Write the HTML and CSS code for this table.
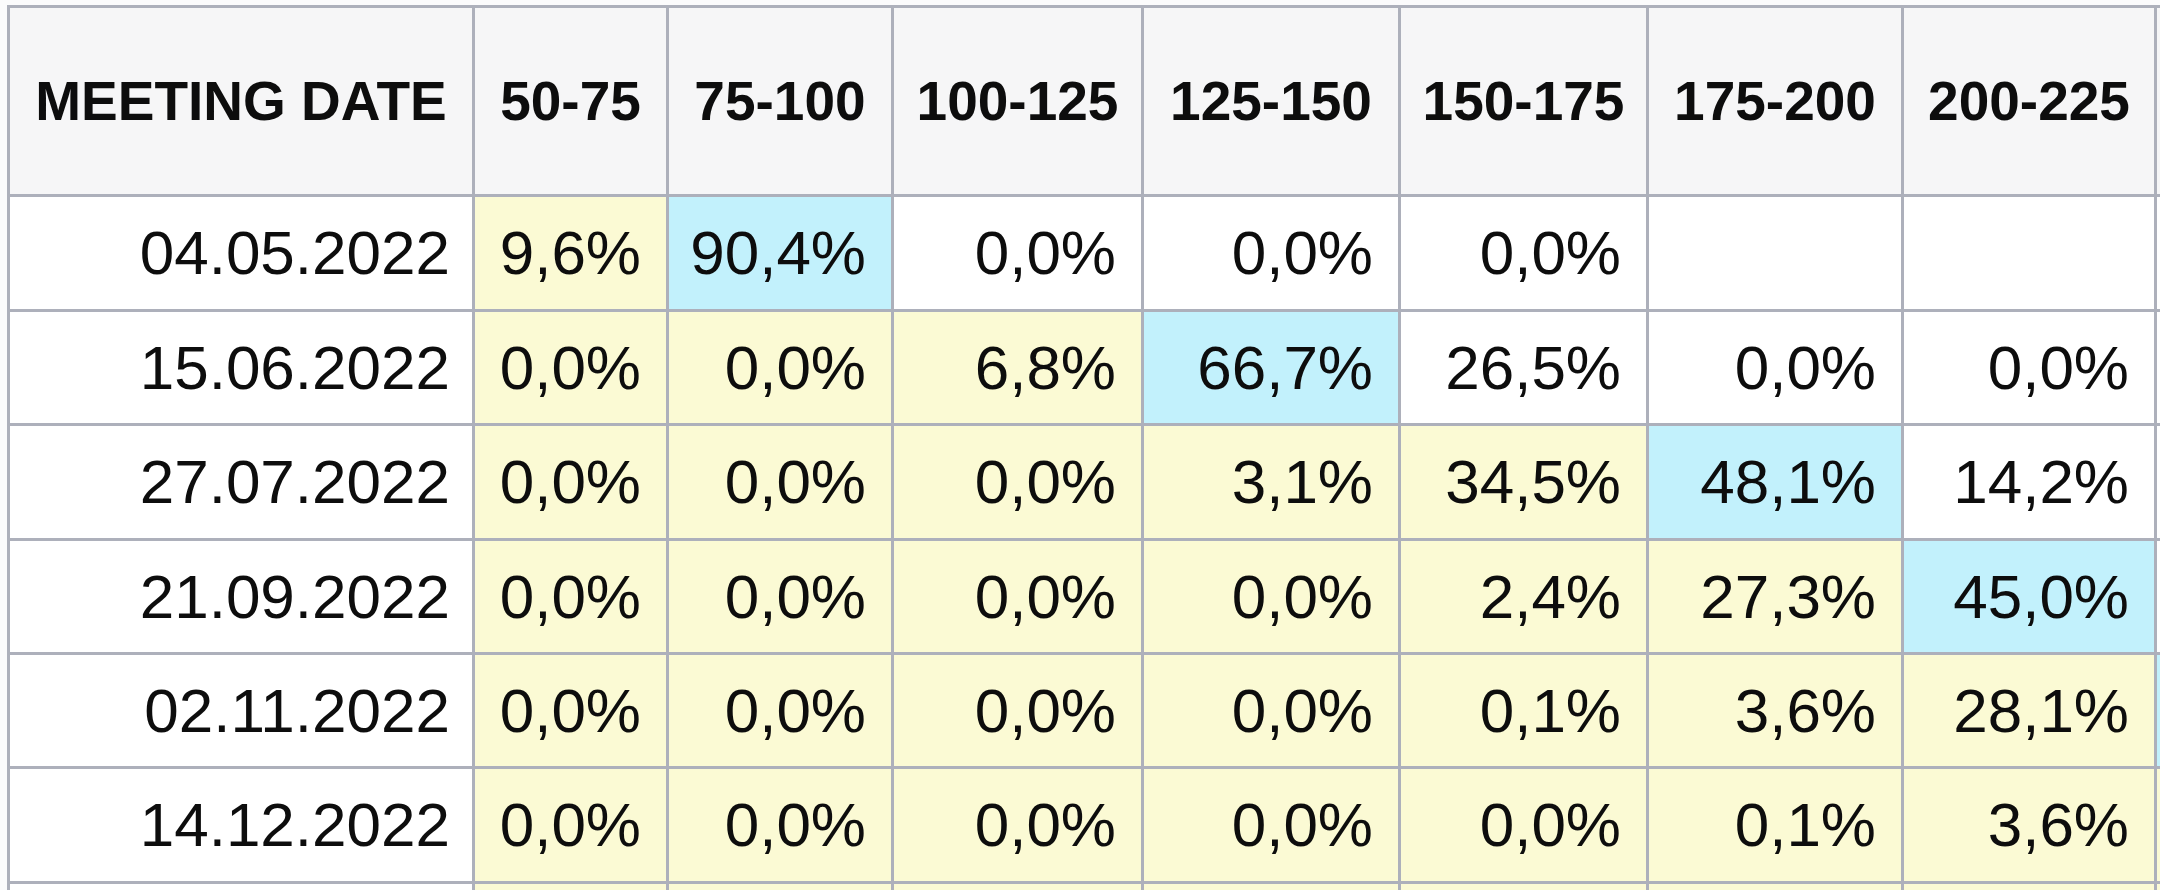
FILE: index.html
```html
<!DOCTYPE html>
<html>
<head>
<meta charset="utf-8">
<link rel="stylesheet" href="styles.css">
</head>
<body>
<div class="frame">
<table class="probs">
  <colgroup>
    <col class="c-date">
    <col class="c1"><col class="c2"><col class="c3"><col class="c4">
    <col class="c5"><col class="c6"><col class="c7"><col class="c8">
  </colgroup>
  <thead>
    <tr>
      <th>MEETING DATE</th>
      <th>50-75</th><th>75-100</th><th>100-125</th><th>125-150</th>
      <th>150-175</th><th>175-200</th><th>200-225</th><th></th>
    </tr>
  </thead>
  <tbody>
    <tr class="r1">
      <td class="date">04.05.2022</td>
      <td class="lo">9,6%</td><td class="max">90,4%</td><td>0,0%</td><td>0,0%</td>
      <td>0,0%</td><td></td><td></td><td></td>
    </tr>
    <tr class="r2">
      <td class="date">15.06.2022</td>
      <td class="lo">0,0%</td><td class="lo">0,0%</td><td class="lo">6,8%</td><td class="max">66,7%</td>
      <td>26,5%</td><td>0,0%</td><td>0,0%</td><td></td>
    </tr>
    <tr class="r3">
      <td class="date">27.07.2022</td>
      <td class="lo">0,0%</td><td class="lo">0,0%</td><td class="lo">0,0%</td><td class="lo">3,1%</td>
      <td class="lo">34,5%</td><td class="max">48,1%</td><td>14,2%</td><td></td>
    </tr>
    <tr class="r4">
      <td class="date">21.09.2022</td>
      <td class="lo">0,0%</td><td class="lo">0,0%</td><td class="lo">0,0%</td><td class="lo">0,0%</td>
      <td class="lo">2,4%</td><td class="lo">27,3%</td><td class="max">45,0%</td><td></td>
    </tr>
    <tr class="r5">
      <td class="date">02.11.2022</td>
      <td class="lo">0,0%</td><td class="lo">0,0%</td><td class="lo">0,0%</td><td class="lo">0,0%</td>
      <td class="lo">0,1%</td><td class="lo">3,6%</td><td class="lo">28,1%</td><td class="max"></td>
    </tr>
    <tr class="r6">
      <td class="date">14.12.2022</td>
      <td class="lo">0,0%</td><td class="lo">0,0%</td><td class="lo">0,0%</td><td class="lo">0,0%</td>
      <td class="lo">0,0%</td><td class="lo">0,1%</td><td class="lo">3,6%</td><td class="lo"></td>
    </tr>
    <tr class="r7">
      <td class="date"></td>
      <td class="lo"></td><td class="lo"></td><td class="lo"></td><td class="lo"></td>
      <td class="lo"></td><td class="lo"></td><td class="lo"></td><td class="lo"></td>
    </tr>
  </tbody>
</table>
</div>
</body>
</html>
```
FILE: styles.css
```css
html, body {
  margin: 0;
  padding: 0;
  background: #fbfbfc;
  overflow: hidden;
  width: 2160px;
  height: 890px;
}

.frame {
  padding: 5px 0 0 7px;
}

.probs {
  border-collapse: collapse;
  table-layout: fixed;
  width: 2405px;
  font-family: "Liberation Sans", Arial, sans-serif;
  color: #0d0d0d;
}

.c-date { width: 465px; }
.c1 { width: 194px; }
.c2 { width: 225px; }
.c3 { width: 250px; }
.c4 { width: 257px; }
.c5 { width: 248px; }
.c6 { width: 255px; }
.c7 { width: 253px; }
.c8 { width: 258px; }

.probs th,
.probs td {
  border: 3px solid #adb0bb;
  padding: 0 25px 0 10px;
  white-space: nowrap;
  overflow: hidden;
}

.probs th {
  background: #f6f6f7;
  font-size: 55px;
  font-weight: bold;
  text-align: center;
  padding: 0;
  height: 186px;
  vertical-align: middle;
}

.probs td {
  background: #ffffff;
  font-size: 62px;
  text-align: right;
  vertical-align: middle;
  line-height: 1;
}

.r1 td, .r3 td, .r6 td { height: 112px; }
.r2 td, .r4 td, .r5 td { height: 111px; }
.r7 td { height: 112px; }

.probs td.date {
  padding-right: 22px;
}

.probs td.lo { background: #fbfad4; }
.probs td.max { background: #c2f1fc; }
```
